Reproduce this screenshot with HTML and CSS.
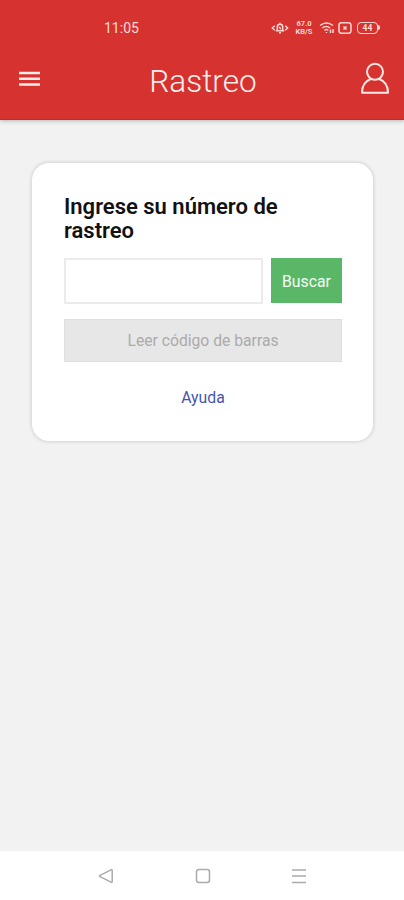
FILE: index.html
```html
<!DOCTYPE html>
<html lang="es">
<head>
<meta charset="utf-8">
<meta name="viewport" content="width=device-width, initial-scale=1">
<title>Rastreo</title>
<link rel="stylesheet" href="styles.css">
</head>
<body>
<div class="screen">
  <header class="header">
    <div class="status">
      <span class="time">11:05</span>
      <div class="indicators">
        <svg class="vibrate" width="18" height="12" viewBox="0 0 18 12"><path d="M3.800 3.800 1.200 6l2.600 2.200M14.200 3.800 16.800 6l-2.600 2.200M4.800 8.800h8.400M6.300 8.500V5a2.700 2.700 0 0 1 5.400 0v3.500M9 2.300V.8M8 10.800h2M8 5l2 2"/></svg>
        <span class="rate"><span>67.0</span><span>KB/S</span></span>
        <svg class="wifi" width="16" height="12" viewBox="0 0 16 12"><path d="M1 3.500c4-3 9-3 13 0M3.200 6c2.500-2 5.500-2 8 0M5.500 8.300c1.200-1 2.600-1 3.800 0M7.500 10v1M11.500 11V7.500M14 7v4"/></svg>
        <svg class="sim" width="14" height="12" viewBox="0 0 14 12"><rect x="1" y=".7" width="12" height="10.600" rx="2.500"/><path d="m5.500 4.500 3 3m0-3-3 3"/></svg>
        <span class="battery">44</span><i class="tip"></i>
      </div>
    </div>
    <div class="toolbar">
      <svg class="menu" width="21" height="16" viewBox="0 0 21 16"><path d="M0 2h21M0 7.700h21M0 13.400h21"/></svg>
      <h1 class="title">Rastreo</h1>
      <svg class="user" width="30" height="33" viewBox="0 0 30 33"><circle cx="15" cy="9.800" r="8"/><path d="M10.800 17C5.500 19 2 23.500 2 30.800h26c0-7.300-3.500-11.800-8.800-13.800"/></svg>
    </div>
  </header>
  <main class="content">
    <section class="card">
      <h2 class="heading">Ingrese su número de rastreo</h2>
      <div class="search">
        <input class="field" type="text" aria-label="Número de rastreo">
        <button class="submit" type="button">Buscar</button>
      </div>
      <button class="scan" type="button" disabled>Leer código de barras</button>
      <a class="help">Ayuda</a>
    </section>
  </main>
  <nav class="navbar">
    <svg width="16" height="16" viewBox="0 0 16 16"><path d="M13 1.800 2 7.300q-.9.700 0 1.400l11 5.500q1.200.4 1.200-.9V2.700q0-1.300-1.200-.9Z"/></svg>
    <svg width="16" height="16" viewBox="0 0 16 16"><rect x="1.500" y="1.500" width="13" height="13" rx="2.500"/></svg>
    <svg width="16" height="16" viewBox="0 0 16 16"><path d="M1 2h14M1 8h14M1 14.500h14"/></svg>
  </nav>
</div>
</body>
</html>
```
FILE: styles.css
```css
* { box-sizing: border-box; }
body { margin: 0; font-family: Roboto, "Liberation Sans", sans-serif; background: #f2f2f2; }
svg { display: block; fill: none; stroke-linecap: butt; stroke-linejoin: round; }
.screen { height: 900px; display: flex; flex-direction: column; }
.header { height: 120px; flex: none; background: #d6322f; color: #fff0ed; box-shadow: 0 1px 4px rgba(0, 0, 0, .25); border-bottom: 1px solid #cc2623; }
.status { height: 55px; padding: 0 24px 0 104px; display: flex; align-items: center; justify-content: space-between; }
.time { font-size: 14px; line-height: 16px; color: #ffdcd8; }
.indicators { display: flex; align-items: center; stroke: #ffd8d4; stroke-width: 1.5; }
.vibrate { margin-right: 6px; }
.rate { width: 18px; display: flex; flex-direction: column; align-items: center; font-size: 7.500px; font-weight: 700; line-height: 8px; color: #ffd8d4; stroke: none; margin-right: 6px; }
.wifi { margin-right: 3px; }
.sim { margin-right: 5px; }
.battery { width: 21px; height: 12px; border: 1.500px solid #ffd8d4; border-radius: 4px; font-size: 8.500px; font-weight: 700; line-height: 10px; text-align: center; color: #ffd8d4; }
.tip { width: 2px; height: 5px; background: #ffd8d4; border-radius: 0 2px 2px 0; }
.toolbar { height: 50px; padding: 0 14px 0 19px; display: grid; grid-template-columns: 27px 1fr 30px; align-items: center; }
.menu { stroke: #ffebe8; stroke-width: 2.500; margin-top: -5px; }
.title { margin: 0; font-size: 31.500px; line-height: 50px; font-weight: 300; text-align: center; padding-top: 2px; }
.user { stroke: #ffe8e5; stroke-width: 2; margin-top: -6px; }
.content { flex: 1; padding: 43px 31px 0 32px; }
.card { height: 278px; background: #fff; border-radius: 17px; box-shadow: 0 0 4px rgba(0, 0, 0, .2); padding: 32px 31px 0 32px; display: flex; flex-direction: column; }
.heading { margin: 0 0 15px; font-size: 22px; line-height: 24px; font-weight: 600; color: #111; }
.search { display: flex; gap: 8px; height: 46px; }
.field { flex: 1; min-width: 0; border: 2px solid #ebebeb; padding: 0 10px; font: 16px Roboto, sans-serif; background: #fff; }
.submit { width: 71px; margin-bottom: 1px; padding: 1px 0 0; border: 0; background: #5bb768; color: #f3fff4; font: 400 15.800px Roboto, sans-serif; }
.scan { height: 43px; margin-top: 15px; border: 1px solid #dfdfdf; background: #e7e7e7; color: #ababab; font: 400 15.700px Roboto, sans-serif; }
.help { margin-top: 26px; text-align: center; color: #4656b0; font-size: 15.800px; line-height: 20px; }
.navbar { height: 49px; flex: none; background: #fff; display: flex; justify-content: space-between; padding: 17px 97px 0 98px; stroke: #ababab; stroke-width: 1.500; }
```
